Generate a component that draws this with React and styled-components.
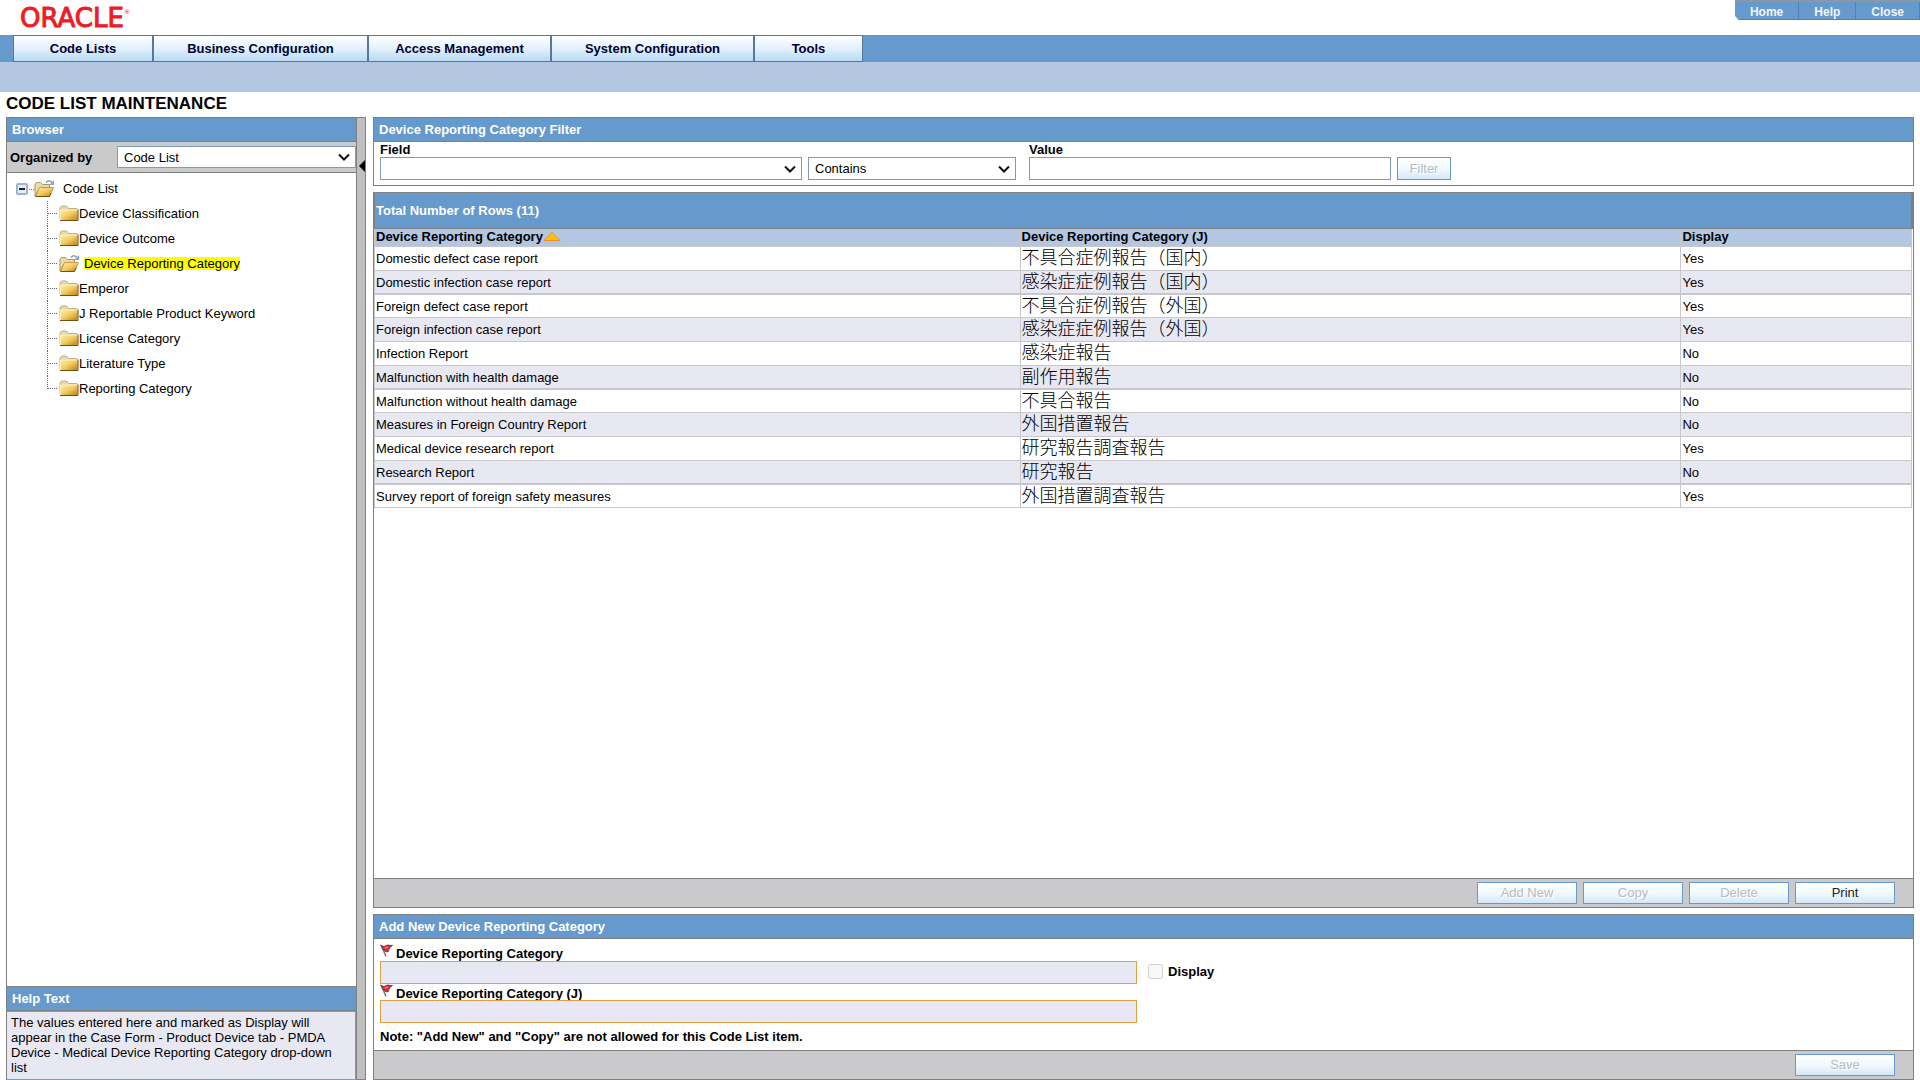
import React, { useState } from "react";
import styled, { createGlobalStyle } from "styled-components";

const GlobalStyle = createGlobalStyle`
  * {
    box-sizing: border-box;
  }

  body {
    margin: 0;
    background: #ffffff;
    color: #000000;
    font: 13px/15px "Liberation Sans", Arial, "Noto Sans CJK JP", sans-serif;
  }
`;

const Page = styled.div`
  display: flex;
  flex-direction: column;
  min-height: 100vh;
`;

const TopBar = styled.header`
  display: flex;
  justify-content: space-between;
  align-items: flex-start;
  height: 35px;
  padding-left: 20px;
`;

const Logo = styled.div`
  display: flex;
  align-items: flex-start;
  height: 35px;
  color: #ee1c25;
  font: 26px/36px "DejaVu Sans", sans-serif;
  -webkit-text-stroke: 1px #ee1c25;

  sup {
    font-size: 6px;
    line-height: 24px;
    -webkit-text-stroke: 0;
  }
`;

const QuickLinks = styled.nav`
  display: flex;
  height: 20px;
  border-top: 2px solid #8c97a6;
  background: #6699cc;
  clip-path: polygon(0 0, 100% 0, 100% 100%, 4px 100%, 0 16px);
`;

const QuickLink = styled.a`
  padding: 0 15px;
  border-right: 1px solid #5580ad;
  border-bottom: 1px solid #5580ad;
  color: #f0f6fc;
  font-size: 12px;
  font-weight: bold;
  line-height: 20px;
  text-decoration: none;
`;

const MenuBar = styled.nav`
  display: flex;
  height: 27px;
  padding-left: 13px;
  background: #6699cc;
`;

const MenuButton = styled.button`
  width: ${props => props.$width}px;
  padding: 0;
  border: 1px solid #56789a;
  background: linear-gradient(#ffffff, #e3f1fc 50%, #b8d9f5);
  color: #000033;
  font: bold 13px/15px "Liberation Sans", Arial, sans-serif;
`;

const SubBar = styled.div`
  height: 30px;
  background: #b3c7e3;
`;

const Title = styled.h1`
  margin: 0;
  padding: 0 0 2px 6px;
  font-size: 17px;
  line-height: 23px;
`;

const Content = styled.div`
  display: flex;
  flex: 1;
  padding: 0 6px;
`;

const Sidebar = styled.aside`
  display: flex;
  flex-direction: column;
  width: 350px;
  border-left: 1px solid #808080;
`;

const Splitter = styled.div`
  width: 10px;
  margin-right: 7px;
  padding: 42px 0 0 2px;
  border: 1px solid #808080;
  background: #c0c0c0;

  svg {
    display: block;
  }
`;

const PanelHeader = styled.h2`
  margin: 0;
  padding: 0 5px;
  height: 25px;
  border-top: 1px solid #808080;
  border-bottom: 1px solid #808080;
  background: #6699cc;
  color: #ffffff;
  font-size: 13px;
  line-height: 23px;
`;

const OrganizeBar = styled.div`
  display: flex;
  align-items: center;
  justify-content: space-between;
  height: 31px;
  padding-left: 3px;
  border-bottom: 1px solid #808080;
  background: #cacaca;
  font-weight: bold;
`;

const chevron =
  "data:image/svg+xml,%3Csvg xmlns='http://www.w3.org/2000/svg' width='12' height='8'%3E%3Cpath d='M1 1.5L6 6.5L11 1.5' fill='none' stroke='%23111' stroke-width='2'/%3E%3C/svg%3E";

const Select = styled.select`
  appearance: none;
  width: ${props => props.$width}px;
  height: ${props => props.$height || 23}px;
  padding: 0 20px 0 6px;
  border: 1px solid #7f9db9;
  border-radius: 0;
  background: #ffffff url("${chevron}") no-repeat right 5px center;
  color: #000000;
  font: 13px/15px "Liberation Sans", Arial, sans-serif;
`;

const TextInput = styled.input`
  display: block;
  width: ${props => props.$width}px;
  height: 23px;
  padding: 0 4px;
  border: 1px solid ${props => (props.$required ? "#e0a040" : "#7f9db9")};
  background: ${props => (props.$required ? "#e8e8f4" : "#ffffff")};
  font: 13px/15px "Liberation Sans", Arial, sans-serif;
`;

const Tree = styled.div`
  flex: 1;
  padding: 3px 0 0 9px;
`;

const TreeRow = styled.div`
  display: flex;
  align-items: center;
  height: 25px;

  svg {
    flex: none;
  }
`;

const RootLabel = styled.span`
  padding-left: 8px;
`;

const TreeList = styled.ul`
  margin: 0;
  padding: 0 0 0 30px;
  list-style: none;
`;

const TreeLabel = styled.span`
  margin-left: ${props => (props.$selected ? 4 : 0)}px;
  background: ${props => (props.$selected ? "#ffff00" : "transparent")};
  line-height: 13px;
`;

const HelpBox = styled.p`
  height: 69px;
  margin: 0;
  padding: 3px 8px 3px 4px;
  border: 1px solid #7f9db9;
  border-left: 0;
  background: #e8e8f3;
`;

const Main = styled.main`
  display: flex;
  flex-direction: column;
  flex: 1;
  gap: 6px;
`;

const Panel = styled.section`
  display: flex;
  flex-direction: column;
  flex: ${props => (props.$grow ? 1 : "none")};
  border: 1px solid #808080;
  border-top: 0;
`;

const FilterRow = styled.div`
  display: flex;
  align-items: flex-end;
  gap: 6px;
  height: 43px;
  padding: 0 6px 5px;
`;

const Field = styled.label`
  display: flex;
  flex-direction: column;
  margin-left: ${props => (props.$spaced ? 7 : 0)}px;
  font-weight: bold;
`;

const RowCount = styled.h2`
  margin: 0;
  height: 37px;
  padding-left: 1px;
  border: 1px solid #808080;
  border-width: 1px 2px 1px 1px;
  background: #6699cc;
  color: #ffffff;
  font-size: 13px;
  line-height: 35px;
`;

const TableArea = styled.div`
  flex: 1;
  padding-right: 1px;
`;

const Table = styled.table`
  width: 100%;
  table-layout: fixed;
  border-collapse: separate;
  border-spacing: 0;
  border-right: 1px solid #c8c8cc;

  th {
    height: 18px;
    padding: 0 1px 2px;
    border-left: 1px solid #c8c8cc;
    border-bottom: 1px solid #c8c8cc;
    background: #b3c7e3;
    line-height: 15px;
    text-align: left;
  }

  th:first-child {
    width: 42%;
  }

  th:nth-child(2) {
    width: 43%;
  }

  td {
    height: 24px;
    padding: 0 1px;
    border-left: 1px solid #c8c8cc;
    border-bottom: 1px solid #c8c8cc;
    line-height: 15px;
  }

  tbody tr:nth-child(even) {
    background: #e8e8f3;
  }

  tbody tr:nth-child(4n + 2) td {
    border-bottom-width: 2px;
  }

  tbody tr:nth-child(4n + 3) td {
    height: 23px;
  }

  tbody td:nth-child(2) {
    padding-bottom: 4px;
    font-family: "Noto Sans CJK JP", sans-serif;
    font-size: 18px;
    font-weight: 300;
    line-height: 17px;
  }
`;

const Footer = styled.div`
  display: flex;
  align-items: center;
  justify-content: flex-end;
  gap: 6px;
  height: 29px;
  padding: 0 18px 1px 0;
  border-top: 1px solid #808080;
  background: #cacacc;
`;

const Button = styled.button`
  width: ${props => props.$width || 100}px;
  height: ${props => props.$height || 22}px;
  padding: 0;
  border: 1px solid #6699cc;
  background: linear-gradient(#ffffff, #f2f9fe 50%, #d3e8f9);
  color: #222222;
  font: 13px/15px "Liberation Sans", Arial, sans-serif;

  &:disabled {
    color: #b8bcc0;
    text-shadow: 1px 1px 0 #ffffff;
  }
`;

const Form = styled.form`
  display: flex;
  flex-direction: column;
  height: 111px;
  padding: 5px 6px 0;
`;

const FormRow = styled.div`
  display: flex;
  align-items: flex-end;
  gap: 11px;
`;

const FlagLabel = styled.span`
  display: flex;
  gap: 3px;
  height: ${props => props.$height}px;
  line-height: 19px;
`;

const CheckLabel = styled.label`
  display: flex;
  align-items: center;
  gap: 5px;
  height: 25px;
  font-weight: bold;

  input {
    width: 15px;
    height: 15px;
    margin: 0;
  }
`;

const Note = styled.p`
  margin: 6px 0 0;
  font-weight: bold;
`;

const menus = [
  { label: "Code Lists", width: 140 },
  { label: "Business Configuration", width: 215 },
  { label: "Access Management", width: 183 },
  { label: "System Configuration", width: 203 },
  { label: "Tools", width: 109 }
];

const codeLists = [
  "Device Classification",
  "Device Outcome",
  "Device Reporting Category",
  "Emperor",
  "J Reportable Product Keyword",
  "License Category",
  "Literature Type",
  "Reporting Category"
];

const rows = [
  ["Domestic defect case report", "不具合症例報告（国内）", "Yes"],
  ["Domestic infection case report", "感染症症例報告（国内）", "Yes"],
  ["Foreign defect case report", "不具合症例報告（外国）", "Yes"],
  ["Foreign infection case report", "感染症症例報告（外国）", "Yes"],
  ["Infection Report", "感染症報告", "No"],
  ["Malfunction with health damage", "副作用報告", "No"],
  ["Malfunction without health damage", "不具合報告", "No"],
  ["Measures in Foreign Country Report", "外国措置報告", "No"],
  ["Medical device research report", "研究報告調査報告", "Yes"],
  ["Research Report", "研究報告", "No"],
  ["Survey report of foreign safety measures", "外国措置調査報告", "Yes"]
];

// one gradient shared by every folder icon
const FolderGradient = () => (
  <svg width="0" height="0" style={{ display: "block" }} aria-hidden="true">
    <defs>
      <linearGradient id="folder" x1="0" y1="0" x2="1" y2="1">
        <stop offset="0" stopColor="#fff0a8" />
        <stop offset="0.5" stopColor="#f2cb63" />
        <stop offset="1" stopColor="#c08310" />
      </linearGradient>
    </defs>
  </svg>
);

const ClosedFolder = () => (
  <svg width="20" height="18" viewBox="0 0 20 18">
    <path d="M1 14V3L2.5 1H7.500L9.500 3.500H18V14Z" fill="#e3d8ae" stroke="#bfb183" />
    <path d="M1.500 5H18.500V15H1.500Z" fill="url(#folder)" />
    <path d="M1.500 15V5H18.500" fill="none" stroke="#fff2b8" />
    <path d="M1 15.500H19V4.500" fill="none" stroke="#6e501a" />
  </svg>
);

const OpenFolder = () => (
  <svg width="21" height="20" viewBox="0 0 21 20">
    <path d="M1 17V5L2.500 3.500H6.500L8.500 5.500H15.500V10H5Z" fill="#e8dca8" stroke="#a8975c" />
    <path d="M1.500 17.500L5.500 8.500H19.500L15.500 17.500Z" fill="url(#folder)" stroke="#c39a45" />
    <path d="M1.500 17.500H15.500L17 14" fill="none" stroke="#6e501a" />
    <path d="M12 3.500C13.500 1 16 1 18 3.500" fill="none" stroke="#8ba4c2" strokeWidth="1.500" />
    <path d="M20 1V6H15.500Z" fill="#8ba4c2" />
  </svg>
);

const Expander = () => (
  <svg width="18" height="12" viewBox="0 0 18 12">
    <rect x="1" y="1" width="10" height="10" rx="1" fill="#e3ebf5" stroke="#9bb5d3" strokeWidth="2" />
    <path d="M3 6H9" stroke="#222" strokeWidth="2" />
    <path d="M13 6.500H18" stroke="#777" strokeDasharray="1 1" />
  </svg>
);

const Branch = ({ last }) => (
  <svg width="13" height="25" viewBox="0 0 13 25">
    <path d={last ? "M1.500 0V13" : "M1.500 0V25"} stroke="#666" strokeDasharray="1 1" />
    <path d="M2 12.500H12" stroke="#666" strokeDasharray="1 1" />
  </svg>
);

const Flag = () => (
  <svg width="13" height="13" viewBox="0 0 13 13">
    <path d="M1.500 2L6 12.500" stroke="#777" strokeWidth="1.500" />
    <path d="M0.500 1L4 2.500L7 1L12.500 1.500L9.500 4L8 8L5 7.500Z" fill="#dc3038" stroke="#3a1a1a" strokeWidth="0.600" />
    <path d="M5 4L8 3" stroke="#ff9a9a" />
  </svg>
);

const SortArrow = () => (
  <svg width="18" height="9" viewBox="0 0 18 9">
    <path d="M9 0.500L17 8.500H1Z" fill="#ffc000" stroke="#f08a24" />
  </svg>
);

const CodeListTree = () => {
  const [selected, setSelected] = useState("Device Reporting Category");

  return (
    <Tree>
      <TreeRow>
        <Expander />
        <OpenFolder />
        <RootLabel>Code List</RootLabel>
      </TreeRow>
      <TreeList>
        {codeLists.map((name, index) => (
          <li key={name}>
            <TreeRow onClick={() => setSelected(name)}>
              <Branch last={index === codeLists.length - 1} />
              {name === selected ? <OpenFolder /> : <ClosedFolder />}
              <TreeLabel $selected={name === selected}>{name}</TreeLabel>
            </TreeRow>
          </li>
        ))}
      </TreeList>
    </Tree>
  );
};

const App = () => {
  return (
    <Page>
      <GlobalStyle />
      <FolderGradient />
      <TopBar>
        <Logo>ORACLE<sup>®</sup></Logo>
        <QuickLinks>
          <QuickLink href="#home">Home</QuickLink>
          <QuickLink href="#help">Help</QuickLink>
          <QuickLink href="#close">Close</QuickLink>
        </QuickLinks>
      </TopBar>
      <MenuBar>
        {menus.map(menu => (
          <MenuButton key={menu.label} $width={menu.width}>{menu.label}</MenuButton>
        ))}
      </MenuBar>
      <SubBar />
      <Title>CODE LIST MAINTENANCE</Title>

      <Content>
        <Sidebar>
          <PanelHeader>Browser</PanelHeader>
          <OrganizeBar>
            <label htmlFor="organized">Organized by</label>
            <Select id="organized" $width={239} $height={22}>
              <option>Code List</option>
            </Select>
          </OrganizeBar>
          <CodeListTree />
          <PanelHeader>Help Text</PanelHeader>
          <HelpBox>
            The values entered here and marked as Display will appear in the Case Form - Product
            Device tab - PMDA Device - Medical Device Reporting Category drop-down list
          </HelpBox>
        </Sidebar>
        <Splitter>
          <svg width="6" height="12" viewBox="0 0 6 12">
            <path d="M6 0V12L0 6Z" />
          </svg>
        </Splitter>

        <Main>
          <Panel>
            <PanelHeader>Device Reporting Category Filter</PanelHeader>
            <FilterRow>
              <Field>
                Field
                <Select $width={422} />
              </Field>
              <Select $width={208} aria-label="Condition">
                <option>Contains</option>
              </Select>
              <Field $spaced>
                Value
                <TextInput type="text" $width={362} />
              </Field>
              <Button $width={54} $height={23} disabled>Filter</Button>
            </FilterRow>
          </Panel>

          <Panel $grow>
            <RowCount>Total Number of Rows ({rows.length})</RowCount>
            <TableArea>
              <Table>
                <thead>
                  <tr>
                    <th>Device Reporting Category<SortArrow /></th>
                    <th>Device Reporting Category (J)</th>
                    <th>Display</th>
                  </tr>
                </thead>
                <tbody>
                  {rows.map(row => (
                    <tr key={row[0]}>
                      <td>{row[0]}</td>
                      <td lang="ja">{row[1]}</td>
                      <td>{row[2]}</td>
                    </tr>
                  ))}
                </tbody>
              </Table>
            </TableArea>
            <Footer>
              <Button disabled>Add New</Button>
              <Button disabled>Copy</Button>
              <Button disabled>Delete</Button>
              <Button>Print</Button>
            </Footer>
          </Panel>

          <Panel>
            <PanelHeader>Add New Device Reporting Category</PanelHeader>
            <Form>
              <FormRow>
                <Field>
                  <FlagLabel $height={17}><Flag />Device Reporting Category</FlagLabel>
                  <TextInput type="text" $width={757} $required readOnly />
                </Field>
                <CheckLabel>
                  <input type="checkbox" disabled />
                  Display
                </CheckLabel>
              </FormRow>
              <Field>
                <FlagLabel $height={16}><Flag />Device Reporting Category (J)</FlagLabel>
                <TextInput type="text" $width={757} $required readOnly />
              </Field>
              <Note>Note: "Add New" and "Copy" are not allowed for this Code List item.</Note>
            </Form>
            <Footer>
              <Button disabled>Save</Button>
            </Footer>
          </Panel>
        </Main>
      </Content>
    </Page>
  );
};

export default App;
